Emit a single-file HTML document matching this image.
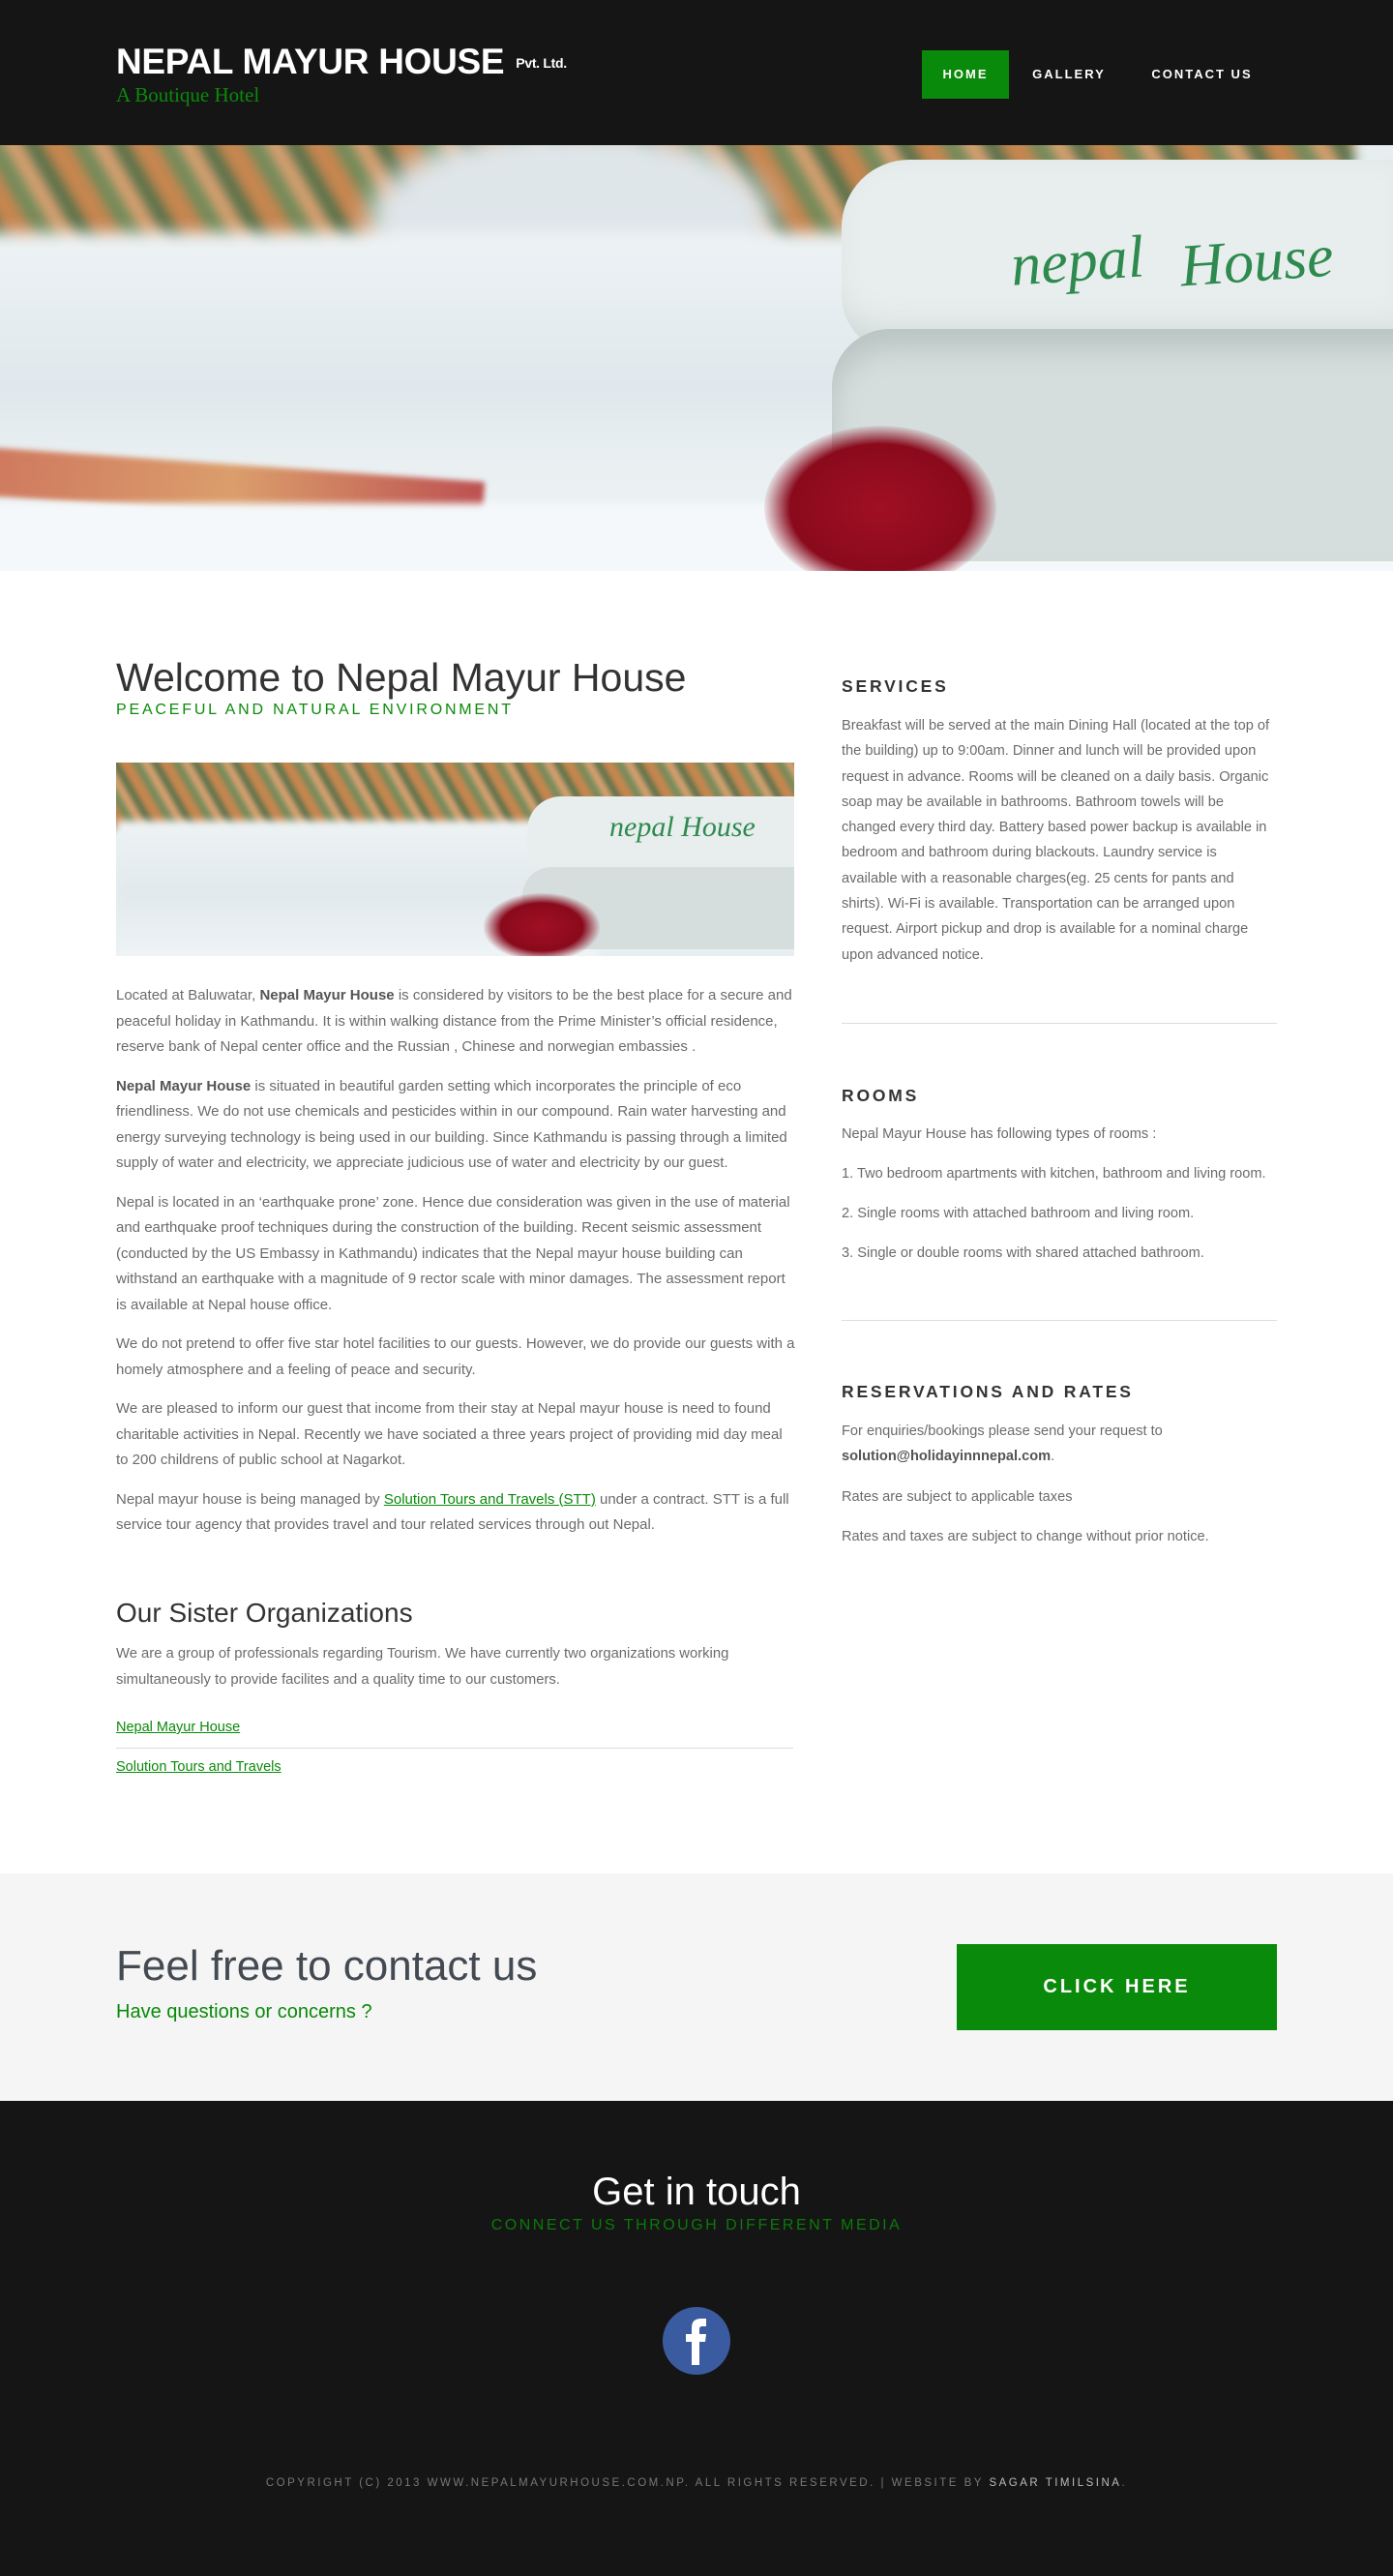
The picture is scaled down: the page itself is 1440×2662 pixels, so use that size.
<!DOCTYPE html>
<html><head><meta charset="utf-8"><style>
*{margin:0;padding:0;box-sizing:border-box}
body{width:1440px;height:2662px;background:#fff;font-family:"Liberation Sans",Arial,sans-serif;position:relative;overflow:hidden}
.abs{position:absolute}
header{position:absolute;left:0;top:0;width:1440px;height:150px;background:#151515}
.logo{left:120px;top:43px;color:#fff;font-weight:bold;font-size:37px;letter-spacing:-0.3px;white-space:nowrap}
.logo small{font-size:14px;margin-left:12px;vertical-align:6px}
.tag{left:120px;top:86px;color:#0a8a0a;font-family:"Liberation Serif",serif;font-size:21px}
.nav{top:52px;height:50px;line-height:50px;color:#fff;font-weight:bold;font-size:13px;letter-spacing:2px;text-align:center}
.hero{left:0;top:150px;width:1440px;height:440px;overflow:hidden;background:#e6eef0}
.txt{color:#6b6b6b;font-size:15px;line-height:26.5px}
.txt b{color:#555}
.rt{color:#6b6b6b;font-size:14.6px;line-height:26.3px;width:446px;left:870px}
h3.s{position:absolute;left:870px;font-size:17.5px;letter-spacing:2.8px;color:#333;font-weight:bold}
.hr{position:absolute;height:1px;background:#ddd}
a{color:#0a8a0a}
</style></head><body>
<header>
<div class="abs logo">NEPAL MAYUR HOUSE<small>Pvt. Ltd.</small></div>
<div class="abs tag">A Boutique Hotel</div>
<div class="abs nav" style="left:953px;width:90px;background:#0a8a0a">HOME</div>
<div class="abs nav" style="left:1050px;width:110px">GALLERY</div>
<div class="abs nav" style="left:1170px;width:145px">CONTACT US</div>
</header>

<div class="abs hero">
 <div class="abs" style="left:-100px;top:-60px;width:1500px;height:280px;background:repeating-linear-gradient(60deg,#c7864f 0 26px,#6f8a5a 26px 44px,#d9a070 44px 62px,#53704a 62px 78px);filter:blur(6px)"></div>
 <div class="abs" style="left:380px;top:-20px;width:420px;height:200px;background:#dfe6ea;border-radius:50% 50% 0 0;filter:blur(14px)"></div>
 <div class="abs" style="left:-50px;top:90px;width:1000px;height:400px;background:linear-gradient(180deg,#eef3f5 0,#dfe8ec 40%,#eaf0f2 60%,#f1f5f7 100%);filter:blur(8px)"></div>
 <div class="abs" style="left:-20px;top:330px;width:520px;height:50px;background:linear-gradient(90deg,#c85a3a,#d88a4a,#b12a2a);transform:rotate(4deg);filter:blur(3px);opacity:.8"></div>
 <div class="abs" style="left:-40px;top:370px;width:1500px;height:120px;background:#f4f8fa;filter:blur(4px)"></div>
 <div class="abs" style="left:870px;top:15px;width:620px;height:200px;background:#e8eeee;border-radius:70px 0 0 60px;box-shadow:inset -20px -20px 40px #c9d2d2"></div>
 <div class="abs" style="left:860px;top:190px;width:620px;height:240px;background:#d6dedd;border-radius:60px 0 0 70px;box-shadow:inset 0 20px 30px #b9c4c3"></div>
 <div class="abs" style="left:1045px;top:85px;font-family:'Liberation Serif',serif;font-style:italic;font-size:62px;color:#2e8a4e;transform:rotate(-4deg)">nepal</div>
 <div class="abs" style="left:1220px;top:85px;font-family:'Liberation Serif',serif;font-style:italic;font-size:62px;color:#2e8a4e;transform:rotate(-4deg)">House</div>
 <div class="abs" style="left:790px;top:290px;width:240px;height:170px;background:radial-gradient(ellipse at 50% 50%,#a10f24 0,#8a0a1c 55%,rgba(138,10,28,0) 72%);border-radius:50%"></div>
</div>

<div class="abs" style="left:120px;top:677px;font-size:41px;color:#333">Welcome to Nepal Mayur House</div>
<div class="abs" style="left:120px;top:725px;font-size:16px;letter-spacing:2.8px;color:#0a8a0a">PEACEFUL AND NATURAL ENVIRONMENT</div>

<div class="abs" style="left:120px;top:788px;width:701px;height:200px;overflow:hidden;background:#e6eef0">
 <div class="abs" style="left:-40px;top:-30px;width:800px;height:100px;background:repeating-linear-gradient(60deg,#c7864f 0 12px,#6f8a5a 12px 20px,#d9a070 20px 29px,#53704a 29px 36px);filter:blur(3px)"></div>
 <div class="abs" style="left:0;top:60px;width:500px;height:150px;background:linear-gradient(180deg,#eef3f5,#e1e9ec 50%,#f1f5f7);filter:blur(4px)"></div>
 <div class="abs" style="left:425px;top:35px;width:290px;height:85px;background:#e8eeee;border-radius:35px 0 0 30px"></div>
 <div class="abs" style="left:420px;top:108px;width:290px;height:85px;background:#d6dedd;border-radius:30px 0 0 35px"></div>
 <div class="abs" style="left:510px;top:50px;font-family:'Liberation Serif',serif;font-style:italic;font-size:30px;color:#2e8a4e">nepal House</div>
 <div class="abs" style="left:380px;top:135px;width:120px;height:70px;background:radial-gradient(ellipse,#a10f24 0,#8a0a1c 50%,rgba(138,10,28,0) 72%)"></div>
</div>

<div class="abs txt" style="left:120px;top:1016px;width:705px">
<p style="margin-bottom:14px">Located at Baluwatar, <b>Nepal Mayur House</b> is considered by visitors to be the best place for a secure and peaceful holiday in Kathmandu. It is within walking distance from the Prime Minister’s official residence, reserve bank of Nepal center office and the Russian , Chinese and norwegian embassies .</p>
<p style="margin-bottom:14px"><b>Nepal Mayur House</b> is situated in beautiful garden setting which incorporates the principle of eco friendliness. We do not use chemicals and pesticides within in our compound. Rain water harvesting and energy surveying technology is being used in our building. Since Kathmandu is passing through a limited supply of water and electricity, we appreciate judicious use of water and electricity by our guest.</p>
<p style="margin-bottom:14px">Nepal is located in an ‘earthquake prone’ zone. Hence due consideration was given in the use of material and earthquake proof techniques during the construction of the building. Recent seismic assessment (conducted by the US Embassy in Kathmandu) indicates that the Nepal mayur house building can withstand an earthquake with a magnitude of 9 rector scale with minor damages. The assessment report is available at Nepal house office.</p>
<p style="margin-bottom:14px">We do not pretend to offer five star hotel facilities to our guests. However, we do provide our guests with a homely atmosphere and a feeling of peace and security.</p>
<p style="margin-bottom:14px">We are pleased to inform our guest that income from their stay at Nepal mayur house is need to found charitable activities in Nepal. Recently we have sociated a three years project of providing mid day meal to 200 childrens of public school at Nagarkot.</p>
<p>Nepal mayur house is being managed by <a href="#">Solution Tours and Travels (STT)</a> under a contract. STT is a full service tour agency that provides travel and tour related services through out Nepal.</p>
</div>

<div class="abs" style="left:120px;top:1651px;font-size:28px;color:#333">Our Sister Organizations</div>
<div class="abs txt" style="left:120px;top:1696px;width:705px;font-size:14.8px">We are a group of professionals regarding Tourism. We have currently two organizations working simultaneously to provide facilites and a quality time to our customers.</div>
<div class="abs" style="left:120px;top:1777px;font-size:14.5px"><a href="#">Nepal Mayur House</a></div>
<div class="hr" style="left:120px;top:1806px;width:700px"></div>
<div class="abs" style="left:120px;top:1818px;font-size:14.5px"><a href="#">Solution Tours and Travels</a></div>

<h3 class="s" style="top:699px">SERVICES</h3>
<div class="abs rt" style="top:737px">Breakfast will be served at the main Dining Hall (located at the top of the building) up to 9:00am. Dinner and lunch will be provided upon request in advance. Rooms will be cleaned on a daily basis. Organic soap may be available in bathrooms. Bathroom towels will be changed every third day. Battery based power backup is available in bedroom and bathroom during blackouts. Laundry service is available with a reasonable charges(eg. 25 cents for pants and shirts). Wi-Fi is available. Transportation can be arranged upon request. Airport pickup and drop is available for a nominal charge upon advanced notice.</div>
<div class="hr" style="left:870px;top:1057px;width:450px"></div>
<h3 class="s" style="top:1122px">ROOMS</h3>
<div class="abs rt" style="top:1159px">Nepal Mayur House has following types of rooms :</div>
<div class="abs rt" style="top:1200px">1. Two bedroom apartments with kitchen, bathroom and living room.</div>
<div class="abs rt" style="top:1241px">2. Single rooms with attached bathroom and living room.</div>
<div class="abs rt" style="top:1282px">3. Single or double rooms with shared attached bathroom.</div>
<div class="hr" style="left:870px;top:1364px;width:450px"></div>
<h3 class="s" style="top:1428px">RESERVATIONS AND RATES</h3>
<div class="abs rt" style="top:1466px">For enquiries/bookings please send your request to <b style="color:#555">solution@holidayinnnepal.com</b>.</div>
<div class="abs rt" style="top:1534px">Rates are subject to applicable taxes</div>
<div class="abs rt" style="top:1575px">Rates and taxes are subject to change without prior notice.</div>

<div class="abs" style="left:0;top:1936px;width:1440px;height:235px;background:#f5f5f5"></div>
<div class="abs" style="left:120px;top:2007px;font-size:44px;color:#444a52">Feel free to contact us</div>
<div class="abs" style="left:120px;top:2068px;font-size:20px;color:#0a8a0a">Have questions or concerns ?</div>
<div class="abs" style="left:989px;top:2009px;width:331px;height:89px;background:#0a8a0a;color:#fff;font-weight:bold;font-size:20px;letter-spacing:3px;text-align:center;line-height:89px">CLICK HERE</div>

<div class="abs" style="left:0;top:2171px;width:1440px;height:491px;background:#151515"></div>
<div class="abs" style="left:0;top:2243px;width:1440px;text-align:center;font-size:40px;color:#fff">Get in touch</div>
<div class="abs" style="left:0;top:2291px;width:1440px;text-align:center;font-size:16px;letter-spacing:2.5px;color:#0a7a0a">CONNECT US THROUGH DIFFERENT MEDIA</div>
<svg class="abs" style="left:685px;top:2384px" width="70" height="70" viewBox="0 0 70 70"><circle cx="35" cy="35" r="35" fill="#3b5ba0"/><path d="M30 60V36h-6v-8h6v-6c0-7 3-10 10-10h5v8h-4c-2 0-3 1-3 3v5h7l-1 8h-6v24z" fill="#fff"/></svg>
<div class="abs" style="left:0;top:2560px;width:1440px;text-align:center;font-size:11.5px;letter-spacing:2.5px;color:#777">COPYRIGHT (C) 2013 WWW.NEPALMAYURHOUSE.COM.NP. ALL RIGHTS RESERVED. | WEBSITE BY <span style="color:#bbb">SAGAR TIMILSINA</span>.</div>
</body></html>
